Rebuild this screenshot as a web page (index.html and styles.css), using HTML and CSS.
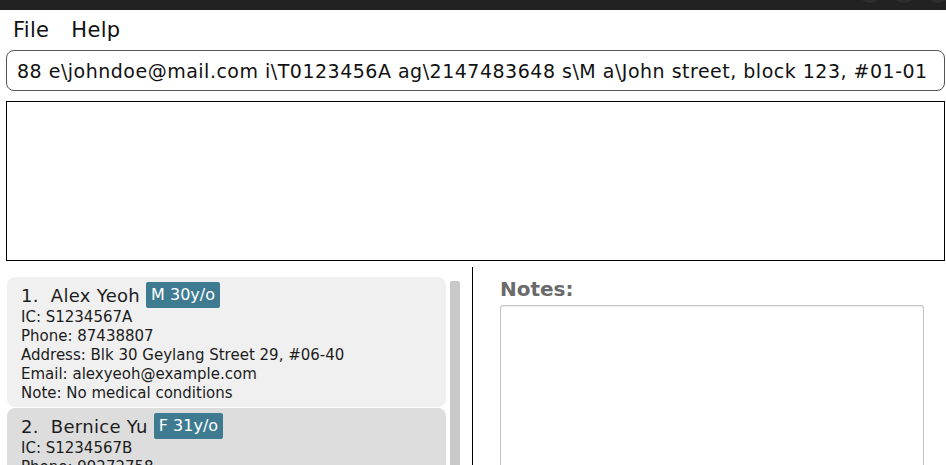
FILE: index.html
```html
<!DOCTYPE html>
<html>
<head>
<meta charset="utf-8">
<link rel="stylesheet" href="styles.css">
</head>
<body>
<div class="titlebar"><span class="wbtn"></span><span class="wbtn"></span><span class="wbtn"></span></div>
<div class="menubar"><span class="menu-item">File</span><span class="menu-item">Help</span></div>
<div class="main">
  <div class="command">88 e\johndoe@mail.com i\T0123456A ag\2147483648 s\M a\John street, block 123, #01-01</div>
  <div class="result"></div>
  <div class="split">
    <div class="listpane">
      <div class="list">
        <div class="card">
          <div class="name-row"><span class="name">1.&nbsp; Alex Yeoh</span><span class="badge">M 30y/o</span></div>
          <div class="line">IC: S1234567A</div>
          <div class="line">Phone: 87438807</div>
          <div class="line">Address: Blk 30 Geylang Street 29, #06-40</div>
          <div class="line">Email: alexyeoh@example.com</div>
          <div class="line">Note: No medical conditions</div>
        </div>
        <div class="card card-alt">
          <div class="name-row"><span class="name">2.&nbsp; Bernice Yu</span><span class="badge">F 31y/o</span></div>
          <div class="line">IC: S1234567B</div>
          <div class="line">Phone: 99272758</div>
          <div class="line">Address: Blk 30 Lorong 3 Serangoon Gardens, #07-18</div>
          <div class="line">Email: berniceyu@example.com</div>
        </div>
      </div>
      <div class="scrollbar"></div>
    </div>
    <div class="divider"></div>
    <div class="notes">
      <div class="notes-label">Notes:</div>
      <div class="notes-box"></div>
    </div>
  </div>
</div>
</body>
</html>
```
FILE: styles.css
```css
html, body {
  margin: 0;
  padding: 0;
  background: #ffffff;
}
body {
  width: 946px;
  height: 465px;
  overflow: hidden;
  font-family: "DejaVu Sans", sans-serif;
  color: #1c1c1c;
}
.titlebar {
  height: 10px;
  background: #222222;
  display: flex;
  justify-content: flex-end;
  gap: 10px;
  overflow: hidden;
  margin-right: -4px;
}
.wbtn {
  flex: none;
  width: 24px;
  height: 24px;
  border-radius: 50%;
  background: #2e2e2e;
  margin-top: -21px;
}
.menubar {
  height: 35px;
  box-sizing: border-box;
  padding: 4px 0 0 13px;
  display: flex;
  align-items: center;
  gap: 22px;
  font-size: 21px;
  letter-spacing: 0.3px;
  color: #111;
}
.main {
  padding: 5px 1px 0 6px;
}
.command {
  height: 41px;
  box-sizing: border-box;
  border: 1px solid #555555;
  border-radius: 8px;
  padding-left: 10px;
  display: flex;
  align-items: center;
  font-size: 19px;
  letter-spacing: 0.5px;
  white-space: nowrap;
  overflow: hidden;
  color: #111;
}
.result {
  margin-top: 10px;
  height: 160px;
  box-sizing: border-box;
  border: 1px solid #000;
}
.split {
  margin-top: 6px;
  height: 198px;
  display: flex;
  overflow: hidden;
}
.listpane {
  width: 466px;
  display: flex;
  padding-left: 1px;
  box-sizing: border-box;
}
.list {
  width: 439px;
  padding-top: 10px;
  display: flex;
  flex-direction: column;
  gap: 1px;
  overflow: hidden;
}
.card {
  flex: none;
  background: #f0f0f0;
  border-radius: 8px;
  padding: 5px 14px 4px;
}
.card-alt {
  background: #dddddd;
}
.name-row {
  display: flex;
  align-items: center;
  height: 26px;
}
.name {
  font-size: 18px;
  letter-spacing: 0.3px;
  white-space: pre;
}
.badge {
  margin-left: 6px;
  height: 26px;
  line-height: 26px;
  padding: 0 5px;
  background: #3e7b91;
  color: #ffffff;
  font-size: 16px;
  border-radius: 2px;
}
.line {
  font-size: 15px;
  line-height: 19px;
  white-space: nowrap;
}
.scrollbar {
  margin-left: 4px;
  margin-top: 14px;
  width: 10px;
  background: #c9c9c9;
  border-radius: 2px 2px 0 0;
}
.divider {
  width: 1px;
  background: #000;
}
.notes {
  padding-left: 27px;
  display: flex;
  flex-direction: column;
}
.notes-label {
  margin-top: 11px;
  font-size: 20px;
  font-weight: bold;
  color: #6a6a6a;
  line-height: 23px;
}
.notes-box {
  margin-top: 4px;
  width: 424px;
  flex: 1;
  box-sizing: border-box;
  border: 1px solid #c4c4c4;
  border-bottom: none;
  border-radius: 3px 3px 0 0;
  background: #fff;
  box-shadow: inset 0 2px 2px -1px rgba(0, 0, 0, 0.08);
}
```
